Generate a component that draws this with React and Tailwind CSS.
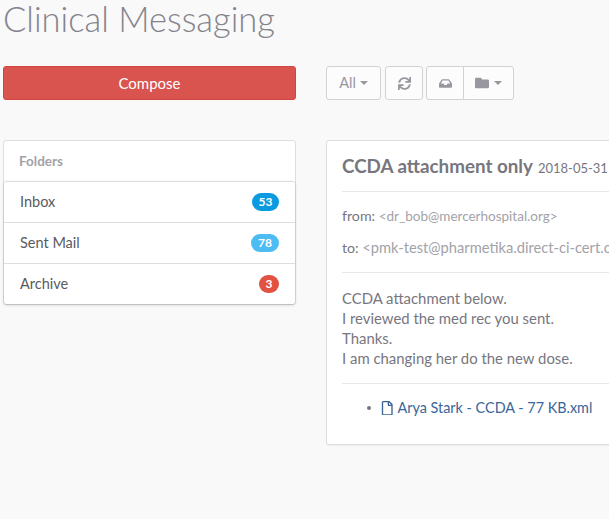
import React from "react";
import { FaSync, FaInbox, FaFolder, FaRegFile } from "react-icons/fa";

const Caret = () => (
  <span className="inline-block w-0 h-0 border-x-[4px] border-x-transparent border-t-[4px] border-t-[#98979f]" />
);

const btn = "h-[34px] flex items-center justify-center gap-[4px] bg-[#fcfcfc] border border-[#d2d2d2] text-[#98979f]";

const folders = [
  ["Inbox", "53", "bg-[#0a9ae0]", "w-[27px]"],
  ["Sent Mail", "78", "bg-[#4dbcf3]", "w-[28px]"],
  ["Archive", "3", "bg-[#e25241]", "w-[20px]"],
];

export default function App() {
  return (
    <div className="w-[609px] h-[519px] overflow-hidden bg-[#f9f9f9] pl-[3px] font-['Lato','Open_Sans',sans-serif] text-[14px] text-[#77767e]">
      <h1 className="h-[66px] text-[34.5px] leading-[38px] font-light text-[#84838c] whitespace-nowrap">
        Clinical Messaging
      </h1>

      <div className="flex items-start">
        <div className="w-[293px] shrink-0">
          <div className="h-[34px] flex items-center justify-center rounded-[3px] bg-[#d9534f] border border-[#d2453f] text-white text-[15px]">
            Compose
          </div>

          <div className="mt-[40px] h-[165px] bg-white border border-[#dedede] rounded-[3px]">
            <div className="h-[40px] flex items-center pl-[15px] pt-[1px] font-bold text-[13.5px] text-[#a3a2a8]">Folders</div>
            <div className="bg-white border-t border-[#dedede] rounded-[3px] shadow-[0_1px_3px_rgba(0,0,0,0.2)]">
              {folders.map(([name, n, color, w], i) => (
                <div
                  key={name}
                  className={`flex items-center justify-between pl-[16px] pr-[16px] text-[#5a5a60] text-[14.5px] ${i ? "h-[41px] border-t border-[#dedede]" : "h-[40px]"}`}
                >
                  <span>{name}</span>
                  <span className={`h-[18px] ${w} ${color} rounded-full flex items-center justify-center text-white text-[12px] font-bold`}>{n}</span>
                </div>
              ))}
            </div>
          </div>
        </div>

        <div className="ml-[30px] w-[320px] shrink-0">
          <div className="flex">
            <div className={`${btn} w-[55px] rounded-[3px] text-[14.5px]`}>All <Caret /></div>
            <div className={`${btn} w-[38px] ml-[4px] rounded-[3px]`}><FaSync className="text-[13px]" /></div>
            <div className={`${btn} w-[38px] ml-[3px] rounded-l-[3px]`}><FaInbox className="text-[13px]" /></div>
            <div className={`${btn} w-[51px] -ml-[1px] rounded-r-[3px] gap-[5px]`}><FaFolder className="text-[14px]" /> <Caret /></div>
          </div>

          <div className="mt-[40px] h-[305px] bg-white border border-[#dedede] rounded-l-[3px] pl-[15px] shadow-[0_1px_1px_rgba(0,0,0,0.05)]">
            <div className="h-[51px] flex items-baseline pt-[13px] whitespace-nowrap border-b border-[#e8e8e8]">
              <span className="text-[18.8px] leading-[24px] font-bold text-[#77767e]">CCDA attachment only</span>
              <span className="ml-[5px] text-[13px] text-[#77767e]">2018-05-31</span>
            </div>
            <div className="h-[81px] pt-[14px] border-b border-[#e8e8e8] whitespace-nowrap">
              <div className="leading-[20px]"><span className="text-[#77767e] text-[14.2px]">from:</span> <span className="text-[#a3a2a8] text-[13.5px]">&lt;dr_bob@mercerhospital.org&gt;</span></div>
              <div className="leading-[20px] mt-[11px]"><span className="text-[#77767e] text-[14.2px]">to:</span> <span className="text-[#a3a2a8] text-[14.7px]">&lt;pmk-test@pharmetika.direct-ci-cert.com&gt;</span></div>
            </div>
            <div className="h-[111px] pt-[15px] border-b border-[#e8e8e8] leading-[20px] text-[#77767e] text-[14.9px]">
              <div>CCDA attachment below.</div>
              <div>I reviewed the med rec you sent.</div>
              <div>Thanks.</div>
              <div>I am changing her do the new dose.</div>
            </div>
            <ul className="pt-[14px] pl-[25px] flex">
              <li className="flex items-center gap-[9px] leading-[20px] text-[#3a659a] text-[14.4px]">
                <span className="w-[4px] h-[4px] rounded-full bg-[#77767e]" />
                <span className="flex items-center gap-[3px]"><FaRegFile className="text-[14.5px]" />Arya Stark - CCDA - 77 KB.xml</span>
              </li>
            </ul>
          </div>
        </div>
      </div>
    </div>
  );
}
